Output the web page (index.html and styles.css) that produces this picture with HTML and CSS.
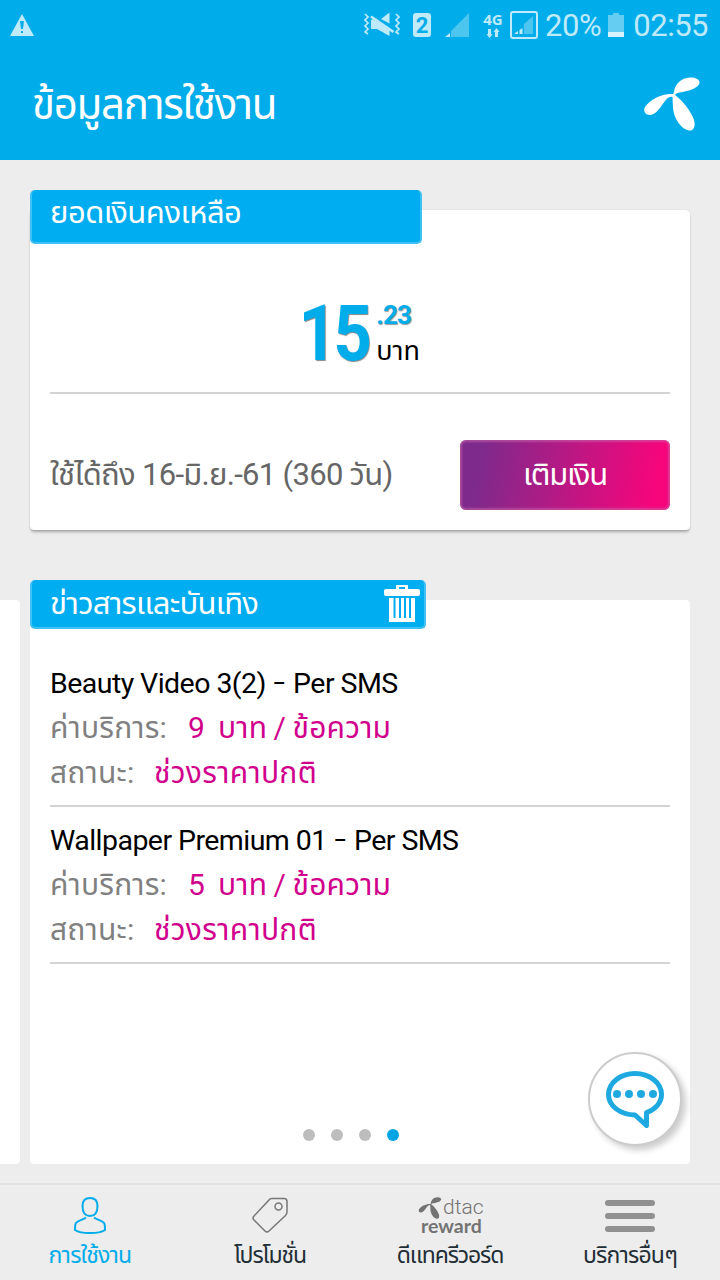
FILE: index.html
```
<!DOCTYPE html>
<html lang="th">
<head>
    <meta charset="utf-8">
    <title>ข้อมูลการใช้งาน</title>
    <link rel="stylesheet" href="styles.css">
</head>
<body>
    <!-- telenor propeller, used in header and reward tab -->
    <svg class="defs" width="0" height="0">
        <symbol id="propeller" viewBox="0 0 56 54">
            <path d="M30 15C31 7 37 1 46 .5C52 0 56 3 55.500 6C54 12 43 14 36 15.500Q32 16 31 18C39 24 47 34 50 43C52 50 49 54 45 53.500C37 52 30 42 29 31L28.500 20Q25 19 21 24C17 29 12 38 6 38C1 38-1 34 1 30C6 22 19 16 29 17Z"/>
        </symbol>
    </svg>

    <div class="header">
        <div class="statusbar">
            <svg class="warning" width="24" height="22" viewBox="0 0 24 22">
                <path d="M12 0L24 22H0Z"/>
                <path class="cut" d="M10 7h4l-1 8h-2zM11 17h2v2h-2z"/>
            </svg>
            <svg class="mute" width="36" height="26" viewBox="0 0 36 26">
                <path d="M17 7L25.500 0.500V11.500zM7 8v9h6l12.500 7v-6L9 7z"/>
                <path class="wave" d="M1 2l3 3-3 3 3 3-3 3 3 3-3 3 3 2M32 2l3 3-3 3 3 3-3 3 3 3-3 3 3 2"/>
                <path class="slash" d="M7 4.500l22.500 15.500"/>
            </svg>
            <div class="sim">2</div>
            <svg class="signal" width="24" height="24" viewBox="0 0 24 24">
                <path class="faint" d="M6 18L24 0v24H6z"/>
                <path d="M0 24l5-4v4z"/>
            </svg>
            <div class="network">
                <span>4G</span>
                <svg width="14" height="10" viewBox="0 0 14 10"><path d="M2 1h3v5h1.500L3.500 10 .5 6H2zM9 9h3V4h1.500L10.500 0 7.500 4H9z"/></svg>
            </div>
            <svg class="signal boxed" width="28" height="28" viewBox="0 0 28 28">
                <rect class="frame" x="1" y="1" width="26" height="26" rx="2"/>
                <path class="faint" d="M14 13l9-8v18h-9z"/>
                <path d="M5 23v-1l3-2v3zM9.500 23v-4l3-2v6z"/>
            </svg>
            <span class="percent">20%</span>
            <svg class="battery" width="16" height="24" viewBox="0 0 16 24">
                <path class="faint" d="M0 2h5V0h6v2h5v17H0z"/>
                <path class="level" d="M0 19h16v5H0z"/>
            </svg>
            <span class="time">02:55</span>
        </div>
        <div class="titlebar">
            <h1>ข้อมูลการใช้งาน</h1>
            <svg class="logo" width="56" height="54"><use href="#propeller"/></svg>
        </div>
    </div>

    <div class="content">
        <div class="card balance">
            <div class="tab"><span>ยอดเงินคงเหลือ</span></div>
            <div class="amount">
                <span class="baht">15</span>
                <div class="side">
                    <span class="satang">.23</span>
                    <span class="unit">บาท</span>
                </div>
            </div>
            <div class="expiry">
                <span class="date">ใช้ได้ถึง 16-มิ.ย.-61 (360 วัน)</span>
                <button class="topup"><span>เติมเงิน</span></button>
            </div>
        </div>

        <div class="slider">
            <div class="previous"></div>
            <div class="card news">
                <div class="tab">
                    <span>ข่าวสารและบันเทิง</span>
                    <svg class="trash" width="36" height="37" viewBox="0 0 36 37">
                        <path d="M2 4h10V1q0-1 1-1h10q1 0 1 1v3h10q2 0 2 2v3q0 2-2 2H2q-2 0-2-2V6q0-2 2-2zM15 2v2h6V2z"/>
                        <path d="M5 13h4.500v20h2V13h3.500v20h2V13h3v20h2V13h3v20h2V13H31v24H5z"/>
                    </svg>
                </div>
                <div class="service first">
                    <p class="name">Beauty Video 3(2) <span class="dash">–</span> Per SMS</p>
                    <p><span class="label fee">ค่าบริการ:</span><span class="value price">9&nbsp; บาท / ข้อความ</span></p>
                    <p><span class="label state">สถานะ:</span><span class="value period">ช่วงราคาปกติ</span></p>
                </div>
                <div class="service">
                    <p class="name">Wallpaper Premium 01 <span class="dash">–</span> Per SMS</p>
                    <p><span class="label fee">ค่าบริการ:</span><span class="value price">5&nbsp; บาท / ข้อความ</span></p>
                    <p><span class="label state">สถานะ:</span><span class="value period">ช่วงราคาปกติ</span></p>
                </div>
                <div class="dots"><i></i><i></i><i></i><i class="current"></i></div>
                <button class="chat">
                    <svg width="58" height="57" viewBox="0 0 58 57">
                        <path class="bubble" d="M29 2.500C14 2.500 2.500 12 2.500 23.500C2.500 35 14 43.500 29 44L40.500 54.500V41.500C49 38.500 55.500 32 55.500 23.500C55.500 12 44 2.500 29 2.500Z"/>
                        <circle cx="11" cy="23" r="4"/><circle cx="23" cy="23" r="4"/><circle cx="35" cy="23" r="4"/><circle cx="47" cy="23" r="4"/>
                    </svg>
                </button>
            </div>
        </div>
    </div>

    <div class="navbar">
        <div class="item active">
            <svg class="icon" width="32" height="37" viewBox="0 0 32 37">
                <path d="M16 1C11 1 8.500 4 8.500 9C8.500 15 11 19 16 19S23.500 15 23.500 9C23.500 4 21 1 16 1ZM12 20.500C9 23 4 23 2 26C1 27 1 30 1 33C7 37 25 37 31 33C31 30 31 27 30 26C28 23 23 23 20 20.500"/>
            </svg>
            <span class="usage">การใช้งาน</span>
        </div>
        <div class="item">
            <svg class="icon" width="36" height="37" viewBox="0 0 36 37">
                <path d="M20 1.500H32Q35 1.500 35 4.500V15Q35 17 33.500 18.500L17 34Q15 36 13 34L2 23Q0 21 2 19L17 3Q18 1.500 20 1.500Z"/>
                <circle cx="26.500" cy="9.500" r="3.500"/>
            </svg>
            <span class="promo">โปรโมชั่น</span>
        </div>
        <div class="item">
            <div class="icon reward">
                <div class="brand"><svg width="24" height="22"><use href="#propeller"/></svg><span>dtac</span></div>
                <b>reward</b>
            </div>
            <span class="rewards">ดีแทครีวอร์ด</span>
        </div>
        <div class="item">
            <div class="icon menu"><i></i><i></i><i></i></div>
            <span class="more">บริการอื่นๆ</span>
        </div>
    </div>
</body>
</html>
```
FILE: styles.css
```
* {
    box-sizing: border-box;
}

body {
    margin: 0;
    width: 720px;
    height: 1280px;
    overflow: hidden;
    display: flex;
    flex-direction: column;
    background: #ededed;
    font-family: Roboto, "Noto Sans Thai", "Noto Sans", sans-serif;
    color: #000;
}

p, h1 {
    margin: 0;
    font-weight: normal;
}

span {
    white-space: nowrap;
}

button {
    border: none;
    padding: 0;
    font-family: inherit;
}

.defs {
    position: absolute;
}

.header {
    height: 160px;
    background: #00ace9;
    color: #fff;
}

/* status bar */
.statusbar {
    height: 50px;
    padding: 0 12px 0 10px;
    display: flex;
    align-items: center;
    color: #bfeafa;
    fill: #bfeafa;
}

.warning .cut {
    fill: #00ace9;
}

.mute {
    margin-left: 330px;
}

.mute .wave, .mute .slash {
    fill: none;
    stroke: #bfeafa;
    stroke-width: 1.7;
}

.mute .slash {
    stroke-width: 2.5;
}

.sim {
    width: 18px;
    height: 24px;
    margin-left: 13px;
    border-radius: 3px;
    background: #bfeafa;
    color: #00ace9;
    font: bold 22px/25px Roboto, sans-serif;
    text-align: center;
}

.signal {
    margin-left: 14px;
}

.signal .faint {
    fill: #4cc5ef;
}

.signal .frame {
    fill: none;
    stroke: #bfeafa;
    stroke-width: 2;
}

.network {
    width: 20px;
    height: 26px;
    margin-left: 14px;
    display: flex;
    flex-direction: column;
    align-items: center;
    font: bold 15px/15px "Open Sans", sans-serif;
}

.network svg {
    flex: none;
    margin-top: 1px;
}

.boxed {
    margin-left: 7px;
}

.percent, .time {
    font-size: 31px;
    line-height: 50px;
    padding-top: 2px;
}

.percent {
    width: 56px;
    margin-left: 7px;
    letter-spacing: -0.4px;
}

.battery {
    margin-left: 7px;
}

.battery .faint {
    fill: #66cdf2;
}

.battery .level {
    fill: #d9f3fc;
}

.time {
    margin-left: auto;
    letter-spacing: -0.5px;
}

.titlebar {
    height: 110px;
    padding: 0 20px 0 32px;
    display: flex;
    align-items: center;
    justify-content: space-between;
}

h1 {
    font-size: 42px;
    line-height: 108px;
    letter-spacing: -1.3px;
}

.logo {
    fill: #fff;
    margin-top: -2px;
}

/* cards */
.card {
    background: #fff;
    border-radius: 4px;
}

.tab {
    margin-top: -20px;
    border: solid #40c1f3;
    border-width: 0 2px 2px;
    border-radius: 5px;
    background: #00adf0;
    color: #fff;
    font-size: 31px;
    letter-spacing: -0.7px;
}

.balance {
    height: 320px;
    margin: 50px 30px 0;
    box-shadow: 0 3px 3px -1px rgba(0, 0, 0, 0.3), 0 0 1px rgba(0, 0, 0, 0.3);
    display: flex;
    flex-direction: column;
}

.balance .tab {
    width: 392px;
    height: 54px;
    padding-left: 18px;
    line-height: 46px;
    letter-spacing: -0.5px;
}

.amount {
    height: 150px;
    margin: 0 20px;
    border-bottom: 2px solid #d3d3d3;
    display: flex;
    justify-content: center;
    padding: 52px 0 0 0;
    color: #00ace9;
}

.baht {
    width: 69px;
    margin-left: 2px;
    font: bold 77px/76px Roboto, sans-serif;
    letter-spacing: -4px;
    text-indent: -4px;
    text-shadow: 1px 1px 1px #888;
    transform: scaleX(0.87);
    transform-origin: left;
}

.side {
    display: flex;
    flex-direction: column;
    margin-left: 5px;
}

.satang {
    font: bold 26px/38px Roboto, sans-serif;
    letter-spacing: -0.8px;
    text-shadow: 1px 1px 1px #999;
}

.unit {
    font-size: 27px;
    line-height: 34px;
    color: #000;
}

.expiry {
    flex: 1;
    margin: 46px 20px 20px;
    display: flex;
    justify-content: space-between;
    font-size: 31px;
    line-height: 70px;
    letter-spacing: -0.7px;
    color: #666;
}

.topup {
    width: 210px;
    height: 70px;
    border-radius: 6px;
    background: linear-gradient(100deg, #7d2a8c 10%, #f7057b 92%);
    box-shadow: inset 0 0 2px 2px rgba(200, 100, 170, 0.6);
    color: #fff;
    font-size: 31px;
    letter-spacing: -1.2px;
}

.slider {
    display: flex;
    gap: 10px;
    margin-top: 70px;
}

.previous {
    width: 20px;
    height: 564px;
    border-radius: 0 4px 4px 0;
    background: #fff;
}

.news {
    position: relative;
    width: 660px;
    height: 564px;
}

.news .tab {
    width: 396px;
    height: 49px;
    padding: 0 4px 0 18px;
    line-height: 48px;
    display: flex;
    align-items: center;
    justify-content: space-between;
}

.trash {
    fill: #fff;
    fill-rule: evenodd;
}

.service {
    height: 157px;
    margin: 0 20px;
    padding-top: 10px;
    border-bottom: 2px solid #d3d3d3;
    font-size: 30px;
    line-height: 45px;
}

.service.first {
    height: 178px;
    padding-top: 31px;
}

.service p {
    height: 45px;
    white-space: nowrap;
}

.service .name {
    font-size: 28.5px;
    line-height: 47px;
    letter-spacing: -0.55px;
}

.dash {
    display: inline-block;
    transform: scaleX(0.7);
    margin: 0 -2px;
}

.label {
    display: inline-block;
    color: #808080;
}

.fee {
    width: 138px;
    letter-spacing: 0.2px;
}

.state {
    width: 104px;
    letter-spacing: 0.2px;
}

.value {
    color: #d1008c;
}

.price {
    letter-spacing: 0.2px;
    word-spacing: -1.2px;
}

.period {
    letter-spacing: 0.3px;
}

.dots {
    position: absolute;
    left: 273px;
    bottom: 23px;
    display: flex;
    gap: 16px;
}

.dots i {
    width: 12px;
    height: 12px;
    border-radius: 50%;
    background: #bdbdbd;
}

.dots .current {
    background: #00a5e3;
}

.chat {
    position: absolute;
    right: 8px;
    bottom: 18px;
    width: 94px;
    height: 94px;
    border: 2px solid #ccc;
    border-radius: 50%;
    background: #fff;
    box-shadow: 4px 4px 6px rgba(0, 0, 0, 0.2);
    fill: #1fa9e1;
}

.chat svg {
    display: block;
    margin: 0 auto;
}

.chat .bubble {
    fill: none;
    stroke: #1fa9e1;
    stroke-width: 5;
    stroke-linejoin: round;
}

/* bottom menu */
.navbar {
    height: 97px;
    margin-top: auto;
    border-top: 2px solid #e2e2e2;
    display: flex;
}

.item {
    width: 180px;
    padding-top: 12px;
    display: flex;
    flex-direction: column;
    align-items: center;
    color: #222e36;
    font-size: 23px;
    line-height: 43px;
    letter-spacing: -0.8px;
}

.active {
    color: #00ace9;
}

.icon {
    height: 37px;
    flex: none;
    fill: none;
    stroke: #777;
    stroke-width: 1.5;
}

.active .icon {
    stroke: #00ace9;
    stroke-width: 2;
}

.promo, .rewards {
    letter-spacing: -1.1px;
}

.reward {
    width: 64px;
    color: #737373;
    fill: #737373;
    stroke: none;
    letter-spacing: 0;
}

.brand {
    height: 20px;
    display: flex;
    gap: 1px;
    font: 300 21px/20px Roboto, sans-serif;
}

.brand svg {
    flex: none;
}

.reward b {
    display: block;
    margin-left: 3px;
    font: bold 19.5px/17px Lato, sans-serif;
}

.menu {
    width: 50px;
    padding-top: 3px;
    display: flex;
    flex-direction: column;
    gap: 7px;
}

.menu i {
    height: 6px;
    border-radius: 3px;
    background: #909090;
}
```
